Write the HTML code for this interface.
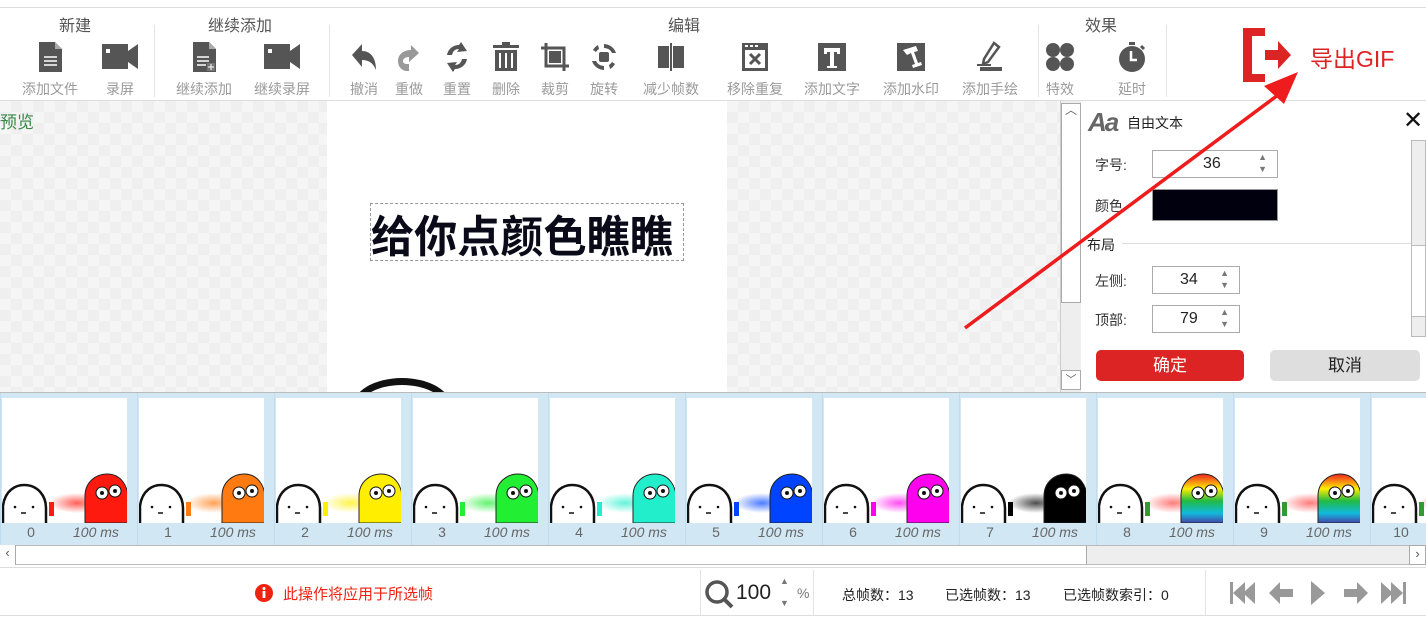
<!DOCTYPE html>
<html><head><meta charset="utf-8">
<style>
*{margin:0;padding:0;box-sizing:border-box}
body{width:1426px;height:617px;overflow:hidden;background:#fff;position:relative;font-family:"Liberation Sans","Noto Sans CJK SC",sans-serif}
.a{position:absolute}
.gl{position:absolute;top:12px;font-size:16px;color:#555;white-space:nowrap}
.lb{position:absolute;top:79px;font-size:14px;color:#9a9a9a;white-space:nowrap;transform:translateX(-50%)}
.ic{position:absolute;top:41px;width:32px;height:32px;transform:translateX(-50%)}
.sep{position:absolute;top:25px;width:1px;height:72px;background:#e3e3e3}
.chk{background-color:#f5f5f5;background-image:conic-gradient(#efefef 25%,transparent 0 50%,#efefef 0 75%,transparent 0);background-size:22px 22px}
.fr{position:absolute;top:393px;width:137px;height:152px;background:#d1e7f4;border-left:1px solid #c0dcee}
.fr .im{position:absolute;left:1px;top:5px;width:125px;height:125px;background:#fff}
.fr .n{position:absolute;top:131px;left:0;width:60px;text-align:center;font-size:14px;color:#666}
.fr .ms{position:absolute;top:131px;left:72px;font-size:14px;color:#666;font-style:italic}
.sp{position:absolute;width:88px;height:28px;border:1px solid #aaa;background:#fff;font-size:16px;color:#222}
.sp span{position:absolute;left:27px;top:4px}
.sp i{position:absolute;right:10px;font-style:normal;font-size:9px;color:#777}
</style></head><body>
<div class="a" style="left:0;top:7px;width:1426px;height:1px;background:#ddd"></div>
<div class="a" style="left:0;top:100px;width:1426px;height:1px;background:#ddd"></div>

<div class="gl" style="left:59px">新建</div>
<div class="gl" style="left:208px">继续添加</div>
<div class="gl" style="left:668px">编辑</div>
<div class="gl" style="left:1085px">效果</div>
<div class="sep" style="left:154px"></div>
<div class="sep" style="left:329px"></div>
<div class="sep" style="left:1038px"></div>
<div class="sep" style="left:1166px"></div>

<svg class="ic" style="left:50px" viewBox="0 0 32 32"><path d="M5 1h16l7 7v23H5z" fill="#555"/><path d="M21 1v7h7" fill="#aaa"/><path d="M10 16h13M10 20h13M10 24h13" stroke="#fff" stroke-width="1.5"/></svg>
<svg class="ic" style="left:120px;width:40px" viewBox="0 0 40 32"><rect x="2" y="3" width="26" height="25" fill="#555"/><path d="M28 10l10-7v25l-10-7z" fill="#555"/><rect x="6" y="8" width="4" height="4" fill="#fff"/></svg>
<svg class="ic" style="left:204px" viewBox="0 0 32 32"><path d="M5 1h16l7 7v23H5z" fill="#555"/><path d="M21 1v7h7" fill="#aaa"/><path d="M9 16h12M9 20h12M9 24h9" stroke="#fff" stroke-width="1.5"/><rect x="19" y="22" width="8" height="8" fill="#777"/><path d="M23 23v6M20 26h6" stroke="#fff"/></svg>
<svg class="ic" style="left:282px;width:40px" viewBox="0 0 40 32"><rect x="2" y="3" width="26" height="25" fill="#555"/><path d="M28 10l10-7v25l-10-7z" fill="#555"/><rect x="6" y="8" width="4" height="4" fill="#fff"/></svg>
<svg class="ic" style="left:364px" viewBox="0 0 32 32"><path d="M4 14L14 3v7c8 0 14 6 14 19c-3-7-7-10-14-10v7z" fill="#555"/></svg>
<svg class="ic" style="left:409px" viewBox="0 0 32 32"><path d="M26 12L18 4v5c-8 0-13 5-13 11s4 10 9 10h2v-7h-2c-2 0-4-1-4-3s2-4 6-4v5z" fill="#999"/></svg>
<svg class="ic" style="left:457px" viewBox="0 0 32 32"><path d="M6 14c1-6 6-10 12-10l2-3 6 9-10 1 2-3c-4 0-6 2-7 6z" fill="#555"/><path d="M26 18c-1 6-6 10-12 10l-2 3-6-9 10-1-2 3c4 0 6-2 7-6z" fill="#555"/></svg>
<svg class="ic" style="left:506px" viewBox="0 0 32 32"><rect x="3" y="4" width="26" height="3" fill="#555"/><rect x="12" y="1" width="8" height="3" fill="#555"/><path d="M5 9h22v21H5z" fill="#555"/><path d="M10 12v15M16 12v15M22 12v15" stroke="#fff" stroke-width="2"/></svg>
<svg class="ic" style="left:555px" viewBox="0 0 32 32"><path d="M7 2v23h23" fill="none" stroke="#555" stroke-width="3"/><path d="M2 7h23v23" fill="none" stroke="#555" stroke-width="3"/><rect x="10" y="10" width="12" height="12" fill="#555"/></svg>
<svg class="ic" style="left:604px" viewBox="0 0 32 32"><path d="M16 3a13 13 0 0 1 12 9h-4a9 9 0 0 0-8-5zM16 29a13 13 0 0 1-12-9h4a9 9 0 0 0 8 5z" fill="#555"/><path d="M5 9a13 13 0 0 1 5-5l1 4a9 9 0 0 0-3 3zM27 23a13 13 0 0 1-5 5l-1-4a9 9 0 0 0 3-3z" fill="#555"/><rect x="11" y="11" width="10" height="10" rx="2" fill="#555"/></svg>
<svg class="ic" style="left:671px" viewBox="0 0 32 32"><rect x="3" y="5" width="11" height="22" fill="#555"/><rect x="18" y="5" width="11" height="22" fill="#555"/><rect x="15" y="2" width="2" height="28" fill="#555"/></svg>
<svg class="ic" style="left:755px" viewBox="0 0 32 32"><rect x="3" y="2" width="26" height="28" fill="#555"/><rect x="6" y="4" width="3" height="2" fill="#fff"/><rect x="11" y="4" width="3" height="2" fill="#fff"/><rect x="16" y="4" width="3" height="2" fill="#fff"/><rect x="6" y="9" width="20" height="18" fill="#fff"/><path d="M11 13l10 10M21 13L11 23" stroke="#555" stroke-width="3"/></svg>
<svg class="ic" style="left:832px" viewBox="0 0 32 32"><rect x="2" y="2" width="28" height="28" fill="#555"/><path d="M8 7h16v6h-3v-2h-3v14h3v2H11v-2h3V11h-3v2H8z" fill="#fff"/></svg>
<svg class="ic" style="left:911px" viewBox="0 0 32 32"><rect x="2" y="2" width="28" height="28" fill="#555"/><path d="M8 9l13-4 2 5-4 1 4 11 3-1 1 3-9 3-1-3 3-1-4-11-4 2z" fill="#fff"/></svg>
<svg class="ic" style="left:990px" viewBox="0 0 32 32"><path d="M20 2l5 4-11 15-5 2 1-5z" fill="none" stroke="#555" stroke-width="2.5"/><path d="M6 26h22v4H6z" fill="#555"/><path d="M3 24h14" stroke="#555" stroke-width="2"/></svg>
<svg class="ic" style="left:1060px" viewBox="0 0 32 32"><ellipse cx="9" cy="9" rx="7" ry="7" fill="#555"/><ellipse cx="23" cy="9" rx="7" ry="7" fill="#555"/><ellipse cx="9" cy="23" rx="7" ry="7" fill="#555"/><ellipse cx="23" cy="23" rx="7" ry="7" fill="#555"/></svg>
<svg class="ic" style="left:1132px" viewBox="0 0 32 32"><rect x="13" y="1" width="6" height="3" fill="#555"/><circle cx="16" cy="18" r="13" fill="#555"/><path d="M15 10v9h6" stroke="#fff" stroke-width="2.5" fill="none"/><path d="M25 5l3 3" stroke="#555" stroke-width="3"/></svg>

<div class="lb" style="left:50px">添加文件</div>
<div class="lb" style="left:120px">录屏</div>
<div class="lb" style="left:204px">继续添加</div>
<div class="lb" style="left:282px">继续录屏</div>
<div class="lb" style="left:364px">撤消</div>
<div class="lb" style="left:409px">重做</div>
<div class="lb" style="left:457px">重置</div>
<div class="lb" style="left:506px">删除</div>
<div class="lb" style="left:555px">裁剪</div>
<div class="lb" style="left:604px">旋转</div>
<div class="lb" style="left:671px">减少帧数</div>
<div class="lb" style="left:755px">移除重复</div>
<div class="lb" style="left:832px">添加文字</div>
<div class="lb" style="left:911px">添加水印</div>
<div class="lb" style="left:990px">添加手绘</div>
<div class="lb" style="left:1060px">特效</div>
<div class="lb" style="left:1132px">延时</div>

<svg class="a" style="left:1240px;top:26px" width="60" height="58" viewBox="0 0 60 58"><path d="M3 2h22v8H12v38h13v8H3z" fill="#dd2424"/><path d="M25 24h13v-9l13 14-13 14v-9H25z" fill="#dd2424"/></svg>
<div class="a" style="left:1310px;top:40px;font-size:23px;color:#dd2424">导出GIF</div>

<div class="a chk" style="left:0;top:101px;width:327px;height:291px"></div>
<div class="a chk" style="left:727px;top:101px;width:333px;height:291px"></div>
<div class="a" style="left:327px;top:101px;width:400px;height:291px;background:#fff;overflow:hidden">
  <div class="a" style="left:43px;top:102px;width:314px;height:58px;border:1px dashed #999"></div>
  <div class="a" style="left:44px;top:103px;font-size:44px;font-weight:bold;color:#0a0a18;letter-spacing:0;white-space:nowrap;font-family:'Noto Sans CJK SC',sans-serif;line-height:58px;transform:scaleX(0.98);transform-origin:left">给你点颜色瞧瞧</div>
  <div class="a" style="left:25px;top:277px;width:100px;height:60px;border:7px solid #111;border-radius:50%"></div>
</div>
<div class="a" style="left:0;top:108px;font-size:17px;color:#3a8a4a">预览</div>
<div class="a" style="left:1060px;top:101px;width:21px;height:291px;background:#eee;border-left:1px solid #ccc"></div>
<div class="a" style="left:1061px;top:103px;width:20px;height:200px;background:#fff;border:1px solid #aaa"></div>
<div class="a" style="left:1065px;top:101px;font-size:12px;color:#666">︿</div>
<div class="a" style="left:1061px;top:370px;width:20px;height:20px;background:#fff;border:1px solid #aaa;font-size:11px;text-align:center;color:#666">﹀</div>

<div class="a" style="left:1081px;top:101px;width:345px;height:291px;background:#fff"></div>
<div class="a" style="left:1088px;top:107px;font-size:26px;font-style:italic;color:#666;font-weight:bold;letter-spacing:-2px">Aa</div>
<div class="a" style="left:1127px;top:113px;font-size:14px;color:#222">自由文本</div>
<div class="a" style="left:1403px;top:106px;font-size:24px;color:#111">✕</div>
<div class="a" style="left:1095px;top:155px;font-size:14px;color:#333">字号:</div>
<div class="sp" style="left:1152px;top:150px;width:126px"><span style="left:50px">36</span><i style="top:1px">▲</i><i style="top:13px">▼</i></div>
<div class="a" style="left:1095px;top:196px;font-size:14px;color:#333">颜色</div>
<div class="a" style="left:1152px;top:189px;width:126px;height:32px;background:#00000f;border:1px solid #999"></div>
<div class="a" style="left:1087px;top:235px;font-size:14px;color:#222">布局</div>
<div class="a" style="left:1122px;top:243px;width:300px;height:1px;background:#ddd"></div>
<div class="a" style="left:1095px;top:271px;font-size:14px;color:#333">左侧:</div>
<div class="sp" style="left:1152px;top:266px"><span>34</span><i style="top:1px">▲</i><i style="top:13px">▼</i></div>
<div class="a" style="left:1095px;top:310px;font-size:14px;color:#333">顶部:</div>
<div class="sp" style="left:1152px;top:305px"><span>79</span><i style="top:1px">▲</i><i style="top:13px">▼</i></div>
<div class="a" style="left:1411px;top:140px;width:15px;height:197px;background:#eee;border:1px solid #bbb"></div>
<div class="a" style="left:1411px;top:245px;width:15px;height:72px;background:#fff;border:1px solid #bbb"></div>
<div class="a" style="left:1096px;top:350px;width:148px;height:31px;background:#dd2424;border-radius:5px;color:#fff;font-size:17px;text-align:center;line-height:31px">确定</div>
<div class="a" style="left:1270px;top:350px;width:150px;height:31px;background:#dedede;border-radius:5px;color:#222;font-size:17px;text-align:center;line-height:31px">取消</div>

<svg class="a" style="left:0;top:0" width="1426" height="617"><path d="M965 328L1282 92" stroke="#ee1c1c" stroke-width="3.5"/><path d="M1298 72L1264 86L1284 104z" fill="#ee1c1c"/></svg>

<div class="a" style="left:0;top:392px;width:1426px;height:153px;background:#d1e7f4;border-top:1px solid #bbb"></div>
<svg width="0" height="0" style="position:absolute"><defs>
<g id="gh"><path d="M1 125V108C3 92 14 87 22 87C36 87 44 98 44 110V125" fill="#fff" stroke="#111" stroke-width="2.5"/><circle cx="13" cy="109" r="1.3" fill="#111"/><circle cx="31" cy="109" r="1.3" fill="#111"/><path d="M19 115h5" stroke="#111" stroke-width="1.5"/></g>
</defs></svg>
<div id="strip"></div>
<script>
var cols=['#ff1a10','#ff7a10','#ffee00','#22ee33','#22eecc','#0044ff','#ff00ee','#000','rb','rb','rb'];
var h='';
for(var i=0;i<11;i++){var c=cols[i];var f=c=='rb'?'url(#rbg)':c;
h+='<div class="fr" style="left:'+(137*i)+'px"><div class="im"><svg width="125" height="125"><defs><linearGradient id="rbg" x1="0" y1="0" x2="0" y2="1"><stop offset="0" stop-color="#e22"/><stop offset=".3" stop-color="#fe0"/><stop offset=".55" stop-color="#2b4"/><stop offset=".8" stop-color="#1bd"/><stop offset="1" stop-color="#44a"/></linearGradient><radialGradient id="sp'+i+'"><stop offset="0" stop-color="'+(c=='rb'?'#f44':c)+'" stop-opacity=".7"/><stop offset="1" stop-color="'+(c=='rb'?'#f44':c)+'" stop-opacity="0"/></radialGradient></defs><use href="#gh"/><ellipse cx="75" cy="105" rx="28" ry="10" fill="url(#sp'+i+')"/><rect x="47" y="104" width="5" height="14" fill="'+(c=='rb'?'#393':c)+'"/><path d="M83 125V98C83 84 94 76 105 76C119 76 126 88 126 100V125z" fill="'+f+'" stroke="#222" stroke-width="1"/><circle cx="100" cy="95" r="6" fill="#fff" stroke="#111"/><circle cx="113" cy="93" r="6" fill="#fff" stroke="#111"/><circle cx="100" cy="95" r="2" fill="#111"/><circle cx="113" cy="93" r="2" fill="#111"/></svg></div><div class="n">'+i+'</div>'+(i<10?'<div class="ms">100 ms</div>':'')+'</div>';}
document.getElementById('strip').innerHTML=h;
</script>
<div class="a" style="left:0;top:545px;width:1426px;height:20px;background:#eee;border-top:1px solid #bbb;border-bottom:1px solid #bbb"></div>
<div class="a" style="left:0;top:545px;width:16px;height:20px;background:#fff;border-right:1px solid #aaa;font-size:13px;color:#555;text-align:center">‹</div>
<div class="a" style="left:16px;top:546px;width:1071px;height:18px;background:#fff;border-right:1px solid #aaa"></div>
<div class="a" style="left:1409px;top:545px;width:17px;height:20px;background:#fff;border:1px solid #aaa;font-size:13px;color:#555;text-align:center">›</div>
<div class="a" style="left:0;top:567px;width:1426px;height:1px;background:#ddd"></div>
<div class="a" style="left:0;top:615px;width:1426px;height:1px;background:#ddd"></div>

<svg class="a" style="left:255px;top:584px" width="18" height="18"><circle cx="9" cy="9" r="9" fill="#e21"/><rect x="7.6" y="7" width="2.8" height="7" fill="#fff"/><circle cx="9" cy="4.5" r="1.5" fill="#fff"/></svg>
<div class="a" style="left:283px;top:583px;font-size:15px;color:#e21">此操作将应用于所选帧</div>
<div class="a" style="left:700px;top:570px;width:1px;height:45px;background:#e3e3e3"></div>
<svg class="a" style="left:703px;top:578px" width="34" height="34"><circle cx="14" cy="14" r="10" fill="none" stroke="#555" stroke-width="3.5"/><path d="M21 21l8 8" stroke="#555" stroke-width="4"/></svg>
<div class="a" style="left:736px;top:581px;font-size:21px;color:#222">100</div>
<div class="a" style="left:780px;top:576px;font-size:9px;color:#777">▲</div>
<div class="a" style="left:780px;top:598px;font-size:9px;color:#777">▼</div>
<div class="a" style="left:797px;top:585px;font-size:14px;color:#777">%</div>
<div class="a" style="left:813px;top:570px;width:1px;height:45px;background:#e3e3e3"></div>
<div class="a" style="left:842px;top:585px;font-size:14px;color:#222">总帧数：13</div>
<div class="a" style="left:945px;top:585px;font-size:14px;color:#222">已选帧数：13</div>
<div class="a" style="left:1063px;top:585px;font-size:14px;color:#222">已选帧数索引：0</div>
<div class="a" style="left:1205px;top:570px;width:1px;height:45px;background:#e3e3e3"></div>
<svg class="a" style="left:1228px;top:580px" width="185" height="26">
<g fill="#999"><rect x="2" y="2" width="3" height="22"/><path d="M5 13l12-11v22z"/><path d="M15 13l12-11v22z"/>
<path d="M41 13l11-11v7h13v8H52v7z"/>
<path d="M83 1l14 12-14 12z"/>
<path d="M140 13l-11-11v7h-13v8h13v7z"/>
<path d="M153 2l12 11-12 11z"/><path d="M163 2l12 11-12 11z"/><rect x="175" y="2" width="3" height="22"/></g></svg>
</body></html>
